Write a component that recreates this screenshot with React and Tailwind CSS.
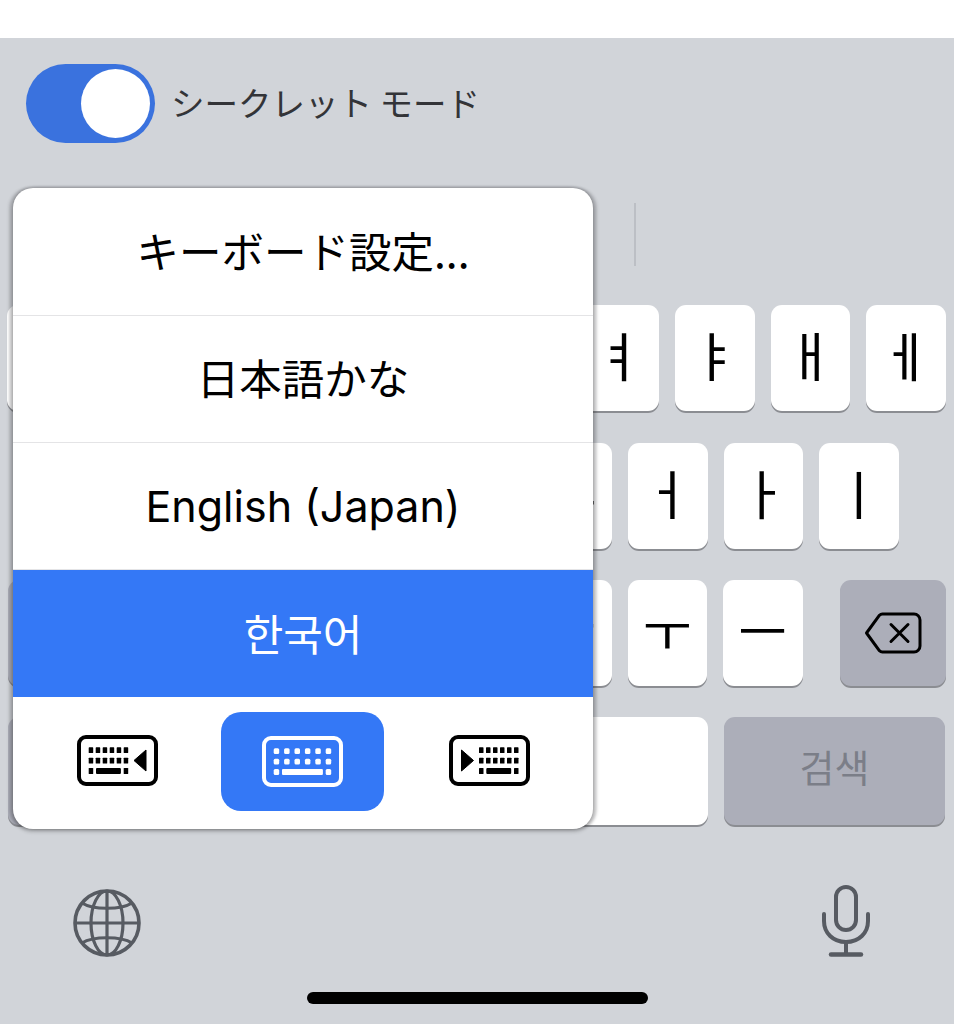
import React from "react";

const CJK = "font-['Noto_Sans_CJK_JP','Noto_Sans_CJK_KR',sans-serif]";

const row1 = ["ㅂ", "ㅈ", "ㄷ", "ㄱ", "ㅅ", "ㅛ", "ㅕ", "ㅑ", "ㅐ", "ㅔ"];
const row2 = ["ㅁ", "ㄴ", "ㅇ", "ㄹ", "ㅎ", "ㅗ", "ㅓ", "ㅏ", "ㅣ"];
const row3 = ["ㅋ", "ㅌ", "ㅊ", "ㅍ", "ㅠ", "ㅜ", "ㅡ"];

const Key = ({ label }) => (
  <div className="w-[79.5px] h-[106px] pb-[7px] flex items-center justify-center rounded-[11px] bg-white shadow-[0_2px_0_#8b8d92] text-black text-[53px] font-['Noto_Sans_CJK_KR',sans-serif] leading-none">
    {label}
  </div>
);

const KeyboardIcon = ({ arrow, inverted }) => {
  const color = inverted ? "#ffffff" : "#000000";
  // with an arrow the little keys get squeezed to one side
  const startX = arrow === "right" ? 30 : 11.7;
  const pitch = arrow ? 7 : 10.4;
  const size = arrow ? 4.5 : 5.5;
  const endX = startX + pitch * 5 + size;
  const dots = [];
  for (let r = 0; r < 2; r++) {
    for (let c = 0; c < 6; c++) {
      dots.push(
        <rect
          key={`${r}-${c}`}
          x={startX + c * pitch}
          y={12.3 + r * 10.4}
          width={size}
          height={5.8}
          rx={inverted ? 1.5 : 0.6}
          fill={color}
        />
      );
    }
  }
  return (
    <svg width="81" height="51" viewBox="0 0 81 51" fill="none">
      <rect x="2" y="2" width="77" height="47" rx="7" stroke={color} strokeWidth="4" />
      {dots}
      <rect x={startX} y="33" width={size} height="6" rx={inverted ? 1.5 : 0.6} fill={color} />
      <rect x={startX + size + 2.8} y="33" width={endX - startX - 2 * size - 5.6} height="6" rx="1" fill={color} />
      <rect x={endX - size} y="33" width={size} height="6" rx={inverted ? 1.5 : 0.6} fill={color} />
      {arrow === "left" && <path d="M69 15 V36 L57 25.5 Z" fill={color} stroke={color} strokeLinejoin="round" />}
      {arrow === "right" && <path d="M12.5 15 V36 L24.5 25.5 Z" fill={color} stroke={color} strokeLinejoin="round" />}
    </svg>
  );
};

const Backspace = () => (
  <svg width="58" height="42" viewBox="0 0 58 42" fill="none" stroke="#000000" strokeWidth="3" strokeLinecap="round" strokeLinejoin="round">
    <path d="M18.5 2 H50 A6 6 0 0 1 56 8 V34 A6 6 0 0 1 50 40 H18.5 A4 4 0 0 1 15.5 38.8 L2.5 21 L15.5 3.2 A4 4 0 0 1 18.5 2 Z" />
    <path d="M27 12.5 L44 29.5 M44 12.5 L27 29.5" />
  </svg>
);

const Globe = () => (
  <svg width="68" height="68" viewBox="0 0 68 68" fill="none" stroke="#575b62" strokeWidth="3.2">
    <circle cx="34" cy="34" r="32" strokeWidth="3.6" />
    <ellipse cx="34" cy="34" rx="16" ry="32" />
    <path d="M34 2 V66 M2 34 H66" />
    <path d="M9 14 C20 21 48 21 59 14" />
    <path d="M9 54 C20 47 48 47 59 54" />
  </svg>
);

const Mic = () => (
  <svg width="48" height="72" viewBox="0 0 48 72" fill="none" stroke="#575b62" strokeWidth="4" strokeLinecap="round">
    <rect x="14" y="2" width="20" height="43" rx="10" />
    <path d="M2 29 V36 C2 48 11 57 24 57 C37 57 46 48 46 36 V29" />
    <path d="M24 57 V69" />
    <path d="M9 69.5 H39" strokeWidth="4.5" />
  </svg>
);

const MenuRow = ({ children, active, last, className }) => (
  <div
    className={`h-[127px] flex items-center justify-center leading-none ${
      active ? "bg-[#3478f6] text-white" : "text-black"
    } ${last ? "" : "border-b border-[#e4e4e6]"} ${className}`}
  >
    {children}
  </div>
);

const App = () => {
  return (
    <div className="w-[954px] h-[1024px] overflow-hidden bg-white">
      <div className="h-[38px] bg-white" />

      <div className={`relative h-[986px] bg-[#d1d4d9] ${CJK}`}>
        {/* toggle */}
        <div className="flex items-center gap-[16px] pt-[26px] pl-[26px]">
          <div className="w-[129px] h-[79px] flex items-center justify-end pr-[5px] rounded-full bg-[#3a72de]">
            <div className="w-[69px] h-[69px] rounded-full bg-white" />
          </div>
          <span className="pb-[4px] text-[33.5px] leading-none text-[#333438] whitespace-pre">シークレット モード</span>
        </div>

        {/* suggestion bar */}
        <div className="h-[162px] pl-[634px] pt-[60px]">
          <div className="w-[2px] h-[63px] bg-[#bcbfc5]" />
        </div>

        {/* keys */}
        <div className="flex flex-col">
          <div className="flex gap-[16px] pl-[6.5px]">
            {row1.map((k) => (
              <Key key={k} label={k} />
            ))}
          </div>
          <div className="flex gap-[16px] pl-[55px] mt-[32px]">
            {row2.map((k) => (
              <Key key={k} label={k} />
            ))}
          </div>
          <div className="flex items-stretch mt-[31px] pl-[8px]">
            <div className="w-[106px] h-[106px] rounded-[11px] bg-[#acaeb9] shadow-[0_2px_0_#8b8d92]" />
            <div className="flex gap-[16px] ml-[36px]">
              {row3.map((k) => (
                <Key key={k} label={k} />
              ))}
            </div>
            <div className="w-[106px] h-[106px] ml-[37px] flex items-center justify-center rounded-[11px] bg-[#acaeb9] shadow-[0_2px_0_#8b8d92]">
              <Backspace />
            </div>
          </div>
          <div className="flex gap-[16px] mt-[31px] pl-[8px]">
            <div className="w-[200px] h-[108px] rounded-[11px] bg-[#acaeb9] shadow-[0_2px_0_#8b8d92]" />
            <div className="w-[484px] h-[108px] rounded-[11px] bg-white shadow-[0_2px_0_#8b8d92]" />
            <div className="w-[221px] h-[108px] pb-[10px] flex items-center justify-center rounded-[11px] bg-[#acaeb9] shadow-[0_2px_0_#8b8d92] text-[38px] leading-none text-[#7b7e88] font-['Noto_Sans_CJK_KR',sans-serif]">
              검색
            </div>
          </div>
        </div>

        {/* bottom icons */}
        <div className="flex items-start justify-between pl-[73px] pr-[84px] mt-[60px]">
          <div className="mt-[4px]">
            <Globe />
          </div>
          <Mic />
        </div>
        <div className="flex justify-center mt-[35px]">
          <div className="w-[341px] h-[12px] rounded-full bg-black" />
        </div>

        {/* language popup */}
        <div className="absolute left-[13px] top-[150px] w-[580px] h-[641px] flex flex-col overflow-hidden rounded-[20px] bg-white shadow-[0_2px_4px_rgba(0,0,0,0.3),-4px_0_3px_rgba(60,60,65,0.22),4px_0_3px_rgba(60,60,65,0.22),0_-2px_2px_rgba(60,60,65,0.15)]">
          <MenuRow className="h-[128px] pb-[3px] text-[42.5px]">キーボード設定...</MenuRow>
          <MenuRow className="pb-[3px] text-[42.5px]">日本語かな</MenuRow>
          <MenuRow className="font-['Inter',sans-serif] text-[43px]">English (Japan)</MenuRow>
          <MenuRow active last className="pb-[2px] font-['Noto_Sans_CJK_KR',sans-serif] text-[43px]">
            한국어
          </MenuRow>
          <div className="flex-1 flex items-start pl-[64px] pt-[15px]">
            <div className="pt-[23px]">
              <KeyboardIcon arrow="left" />
            </div>
            <div className="w-[163px] h-[99px] ml-[63px] flex items-center justify-center rounded-[20px] bg-[#3478f6]">
              <KeyboardIcon inverted />
            </div>
            <div className="pt-[23px] ml-[65px]">
              <KeyboardIcon arrow="right" />
            </div>
          </div>
        </div>
      </div>
    </div>
  );
};

export default App;
